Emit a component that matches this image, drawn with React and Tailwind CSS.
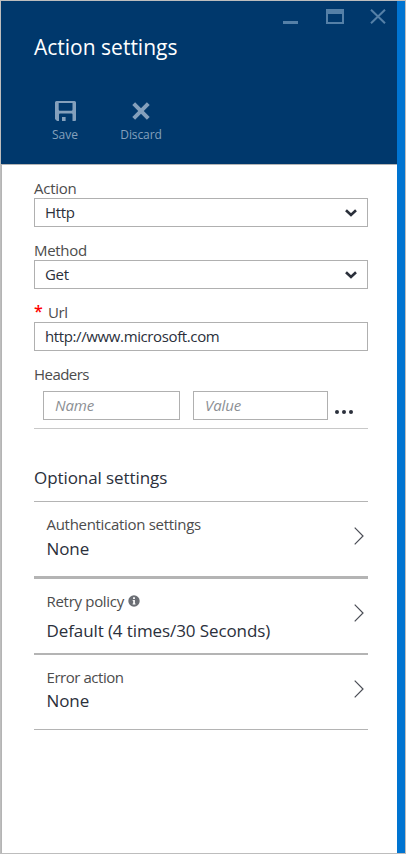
import React from "react";

function SaveIcon() {
  return (
    <svg className="block" width="21" height="21" viewBox="0 0 21 21" fill="#84a0bc">
      <path
        fillRule="evenodd"
        d="M1.500 0H19.500Q21 0 21 1.500V19Q21 20 20 20H17.500V13.500Q17.500 12.500 16.500 12.500H5Q4 12.500 4 13.500V20H2L0 18V1.500Q0 0 1.500 0ZM3.700 2V8.500Q3.700 9.700 4.900 9.700H16.300Q17.500 9.700 17.500 8.500V2Z"
      />
      <rect x="7" y="16" width="3.600" height="4" />
    </svg>
  );
}

function DiscardIcon() {
  return (
    <svg className="block" width="18" height="18" viewBox="0 0 18 18" stroke="#84a0bc" strokeWidth="4">
      <path d="M1.700 1.700L16.300 16.300M16.300 1.700L1.700 16.300" />
    </svg>
  );
}

function SelectArrow() {
  return (
    <svg className="block" width="12" height="8" viewBox="0 0 12 8" fill="none" stroke="#2b303b" strokeWidth="2.600">
      <path d="M1 1.200L6 6L11 1.200" />
    </svg>
  );
}

function Chevron() {
  return (
    <svg className="block" width="10" height="18" viewBox="0 0 10 18" fill="none" stroke="#4a4d55" strokeWidth="1.200">
      <path d="M0.700 0.700L9 9L0.700 17.300" />
    </svg>
  );
}

function InfoIcon() {
  return (
    <svg className="block" width="12" height="12" viewBox="0 0 12 12">
      <circle cx="6" cy="6" r="5.700" fill="#6b6e74" />
      <path d="M5.100 2.300H6.900V3.900H5.100ZM4.600 4.900H6.900V8.500H7.500V9.400H4.600V8.500H5.200V5.800H4.600Z" fill="#fff" />
    </svg>
  );
}

function Box({ children, className = "" }) {
  return (
    <div className={"flex h-[29px] items-center justify-between border border-[#b0b0b0] px-[10px] text-[#2b303b] " + className}>
      {children}
    </div>
  );
}

function Setting({ className, label, value, info, valueClass, labelClass }) {
  return (
    <div className={"flex justify-between border-[#b4b4b4] pl-[12.5px] pr-[4px] " + className}>
      <div className="pt-[12px]">
        <div className="flex items-center gap-[4px] text-[15px] leading-5 text-[#4c4c4c]">
          <span className={labelClass}>{label}</span>
          {info && <InfoIcon />}
        </div>
        <div className={"text-[17px] leading-6 text-[#2b303b] " + valueClass}>{value}</div>
      </div>
      <div className="pt-[25px]">
        <Chevron />
      </div>
    </div>
  );
}

export default function App() {
  return (
    <div className="flex h-[854px] w-[406px] flex-col overflow-hidden whitespace-nowrap border border-[#bdbdbd] bg-white font-['Open_Sans','Noto_Sans',sans-serif] text-[15px]">
      <div className="flex min-h-0 flex-1">
        <div className="flex flex-1 flex-col">
          <header className="h-[164px] border-b border-[#b4b4b4] bg-[#00386c]">
            <div className="flex h-[26px] items-start justify-end pr-[11px] pt-[8px]">
              <div className="mr-[28px] mt-[12px] h-[3px] w-[15px] bg-[#5580a7]" />
              <div className="mr-[26px] h-[15px] w-[18px] border-2 border-t-[5px] border-[#5580a7]" />
              <svg className="block" width="16" height="15" viewBox="0 0 16 15" stroke="#5580a7" strokeWidth="2">
                <path d="M1 0.700L15 14.300M15 0.700L1 14.300" />
              </svg>
            </div>
            <h1 className="ml-[33px] mt-[6px] text-[21px] leading-[28px] text-white">Action settings</h1>
            <div className="ml-[43px] mt-[40px] flex text-[12px] font-medium leading-[16px] text-[#84a0bc]">
              <div className="flex w-[42px] flex-col items-center">
                <SaveIcon />
                <span className="mt-[5px]">Save</span>
              </div>
              <div className="ml-[28px] flex w-[54px] flex-col items-center">
                <div className="flex h-[20px] items-center">
                  <DiscardIcon />
                </div>
                <span className="mt-[6px] tracking-[-0.1px]">Discard</span>
              </div>
            </div>
          </header>
          <main className="flex-1 border-l border-[#b4b4b4] pl-[32px] pr-[29px] pt-[13px]">
            <div className="leading-5 text-[#4c4c4c]">
              <div className="tracking-[-0.25px]">Action</div>
              <Box><span className="pb-[2px] tracking-[-0.3px]">Http</span><SelectArrow /></Box>
              <div className="mt-[13px] tracking-[-0.3px]">Method</div>
              <Box><span className="pb-[2px] tracking-[-0.3px]">Get</span><SelectArrow /></Box>
              <div className="mt-[13px] flex">
                <span className="w-[14px] text-[16px] font-semibold leading-[18px] text-[#f00]">*</span>
                <span className="tracking-[-0.4px]">Url</span>
              </div>
              <Box><span className="pb-[2px] tracking-[-0.38px]">http://www.microsoft.com</span></Box>
              <div className="mt-[13px] tracking-[-0.55px]">Headers</div>
              <div className="mt-[7px] flex border-b border-[#c8c8c8] pb-[8px] pl-[9px]">
                <Box className="w-[137px] italic"><span className="pb-[2px] pl-px tracking-[-0.1px] text-[#8c8f94]">Name</span></Box>
                <Box className="ml-[13px] w-[135px] italic"><span className="pb-[2px] pl-px tracking-[-0.1px] text-[#8c8f94]">Value</span></Box>
                <div className="ml-[7px] mt-[19px] flex gap-[3px]">
                  <i className="size-[4px] rounded-full bg-[#2b303b]" />
                  <i className="size-[4px] rounded-full bg-[#2b303b]" />
                  <i className="size-[4px] rounded-full bg-[#2b303b]" />
                </div>
              </div>
            </div>
            <h2 className="mt-[37px] h-[35px] text-[17px] leading-6 tracking-[-0.08px] text-[#2b303b]">Optional settings</h2>
            <Setting className="h-[75px] border-t" label="Authentication settings" value="None" labelClass="tracking-[-0.3px]" valueClass="mt-[3px] tracking-[-0.1px]" />
            <Setting className="h-[77px] border-t-[3px]" label="Retry policy" info value="Default (4 times/30 Seconds)" labelClass="tracking-[-0.3px]" valueClass="mt-[8px] tracking-[-0.1px]" />
            <Setting className="h-[77px] border-b border-t-2" label="Error action" value="None" labelClass="tracking-[-0.45px]" valueClass="mt-[2px] tracking-[-0.1px]" />
          </main>
        </div>
        <div className="w-[8px] bg-[#0074d1]" />
      </div>
    </div>
  );
}
